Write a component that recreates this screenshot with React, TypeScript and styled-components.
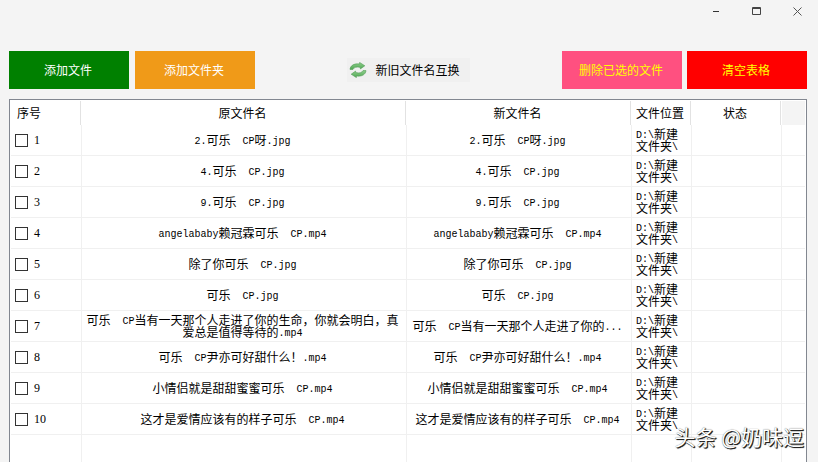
import React, { useState } from "react";
import styled, { createGlobalStyle } from "styled-components";

const GlobalStyle = createGlobalStyle`
  * { box-sizing: border-box; }
  html, body { margin: 0; background: #f4f4f4; }
  body, button, input, table {
    font-family: "Noto Sans CJK SC", sans-serif;
    font-size: 12px;
    line-height: 12px;
    color: #000;
  }
`;

const Window = styled.div`
  display: flex;
  flex-direction: column;
  height: 100vh;
  overflow: hidden;
`;

const TitleBar = styled.header`
  display: flex;
  justify-content: flex-end;
  height: 51px;
  flex: none;
`;

const CaptionButton = styled.button`
  display: flex;
  align-items: center;
  justify-content: center;
  width: 41px;
  height: 23px;
  padding: 0;
  border: 0;
  background: transparent;
`;

const Toolbar = styled.nav`
  display: flex;
  align-items: center;
  justify-content: space-between;
  flex: none;
  padding: 0 11px 0 9px;
`;

const Group = styled.div<{ $gap: number }>`
  display: flex;
  gap: ${(p) => p.$gap}px;
`;

const ActionButton = styled.button<{ $bg: string; $fg: string }>`
  width: 120px;
  height: 38px;
  padding: 0 2px 0 0;
  border: 0;
  background: ${(p) => p.$bg};
  color: ${(p) => p.$fg};
`;

const SwapButton = styled.button`
  display: flex;
  align-items: center;
  gap: 8px;
  height: 24px;
  padding: 0 10px 0 2px;
  border: 0;
  background: #f0f0f0;
`;

const Frame = styled.main`
  display: flex;
  flex: 1;
  margin: 10px 11px 0 9px;
  padding: 1px 1px 0;
  border: 1px solid #828790;
  border-bottom: 0;
  background: #fff;
`;

const Grid = styled.table`
  width: 100%;
  table-layout: fixed;
  border-spacing: 0;
`;

const Column = styled.col<{ $width?: number }>`
  width: ${(p) => (p.$width ? `${p.$width}px` : "auto")};
`;

const HeadCell = styled.th`
  height: 24px;
  padding: 0;
  font-weight: 400;
`;

const HeadLabel = styled.div<{ $start?: boolean }>`
  height: 24px;
  margin-right: 1px;
  padding: ${(p) => (p.$start ? "0 6px" : "0 2px 0 0")};
  border-right: 1px solid #e2e2e2;
  line-height: 24px;
  white-space: nowrap;
  text-align: ${(p) => (p.$start ? "left" : "center")};
`;

const HeadRest = styled.td`
  padding: 0;
  background: #f4f4f4;
`;

const Cell = styled.td<{ $start?: boolean; $last?: boolean }>`
  height: 31px;
  padding: ${(p) => (p.$start ? "0 4px" : "0 6px 0 3px")};
  border-bottom: 1px solid #f0f0f0;
  border-right: ${(p) => (p.$last ? "0" : "1px solid #f0f0f0")};
  text-align: ${(p) => (p.$start ? "left" : "center")};
  vertical-align: middle;
  white-space: pre-wrap;
`;

const EmptyCell = styled.td<{ $last?: boolean }>`
  padding: 0;
  border-right: ${(p) => (p.$last ? "0" : "1px solid #f0f0f0")};
`;

const RowLabel = styled.label`
  display: flex;
  align-items: center;
  gap: 6px;
`;

const Check = styled.input`
  appearance: none;
  width: 13px;
  height: 13px;
  margin: 0;
  border: 1px solid #333;
  background: #fff;
  &:checked { background: #333; box-shadow: inset 0 0 0 2px #fff; }
`;

const RowNumber = styled.span`
  font-family: "Liberation Serif", serif;
  line-height: 14px;
`;

const Latin = styled.span`
  font-family: "Liberation Mono", monospace;
  font-size: 10px;
  line-height: 1px;
  vertical-align: 1px;
`;

const Watermark = styled.div`
  position: absolute;
  right: 14px;
  bottom: 14px;
  font-size: 21px;
  line-height: 24px;
  color: #fff;
  text-shadow: 1px 1px 1px #222, 1px 1px 0 #333, 0 0 1px #666;
  white-space: nowrap;
  pointer-events: none;
`;

/* Half-width characters take exactly half the advance of a full-width one. */
function Mixed({ text }: { text: string }) {
  return (
    <>
      {text.split(/([\x20-\x7e]+)/).map((part, i) =>
        i % 2 ? <Latin key={i}>{part}</Latin> : part
      )}
    </>
  );
}

function SwapIcon() {
  return (
    <svg width="18" height="16" viewBox="0 0 18 16" aria-hidden="true">
      <defs>
        <linearGradient id="leaf" x1="0" y1="0" x2="0" y2="1">
          <stop offset="0" stopColor="#8fd08c" />
          <stop offset="1" stopColor="#4fa653" />
        </linearGradient>
      </defs>
      <g fill="url(#leaf)" stroke="#4f9a54" strokeWidth="0.6" strokeLinejoin="round">
        <path d="M1 7.4C1.4 3.4 5.2 1.3 10.6 2V.4L15.8 3.8 11.4 6.9V5.5C7.6 4.5 5 5.2 4 7.4Z" />
        <path d="M17 8.6C16.6 12.6 12.8 14.7 7.4 14v1.6L2.2 12.2 6.6 9.1v1.4C10.4 11.5 13 10.8 14 8.6Z" />
      </g>
    </svg>
  );
}

const names: [string, string?][] = [
  ["2.可乐  CP呀.jpg"],
  ["4.可乐  CP.jpg"],
  ["9.可乐  CP.jpg"],
  ["angelababy赖冠霖可乐  CP.mp4"],
  ["除了你可乐  CP.jpg"],
  ["可乐  CP.jpg"],
  [
    "可乐  CP当有一天那个人走进了你的生命，你就会明白，真爱总是值得等待的.mp4",
    "可乐  CP当有一天那个人走进了你的...",
  ],
  ["可乐  CP尹亦可好甜什么！.mp4"],
  ["小情侣就是甜甜蜜蜜可乐  CP.mp4"],
  ["这才是爱情应该有的样子可乐  CP.mp4"],
];

export default function App() {
  const [picked, setPicked] = useState<number[]>([]);
  const toggle = (n: number) =>
    setPicked((p) => (p.includes(n) ? p.filter((x) => x !== n) : [...p, n]));

  return (
    <Window>
      <GlobalStyle />
      <TitleBar>
        <CaptionButton aria-label="最小化">
          <svg width="9" height="9" stroke="#333" fill="none"><path d="M2 4.5h6" /></svg>
        </CaptionButton>
        <CaptionButton aria-label="最大化">
          <svg width="9" height="9" stroke="#444" fill="none">
            <path d="M.5 .5h8v7h-8zM0 1.5h9" />
          </svg>
        </CaptionButton>
        <CaptionButton aria-label="关闭">
          <svg width="9" height="9" stroke="#555" fill="none"><path d="M.5 .5l8 8M8.5 .5l-8 8" /></svg>
        </CaptionButton>
      </TitleBar>
      <Toolbar>
        <Group $gap={6}>
          <ActionButton $bg="#008000" $fg="#fff">添加文件</ActionButton>
          <ActionButton $bg="#f09a18" $fg="#fff">添加文件夹</ActionButton>
        </Group>
        <SwapButton>
          <SwapIcon />
          新旧文件名互换
        </SwapButton>
        <Group $gap={5}>
          <ActionButton $bg="#ff5080" $fg="#ff0">删除已选的文件</ActionButton>
          <ActionButton $bg="#ff0000" $fg="#ff0">清空表格</ActionButton>
        </Group>
      </Toolbar>
      <Frame>
        <Grid>
          <colgroup>
            <Column $width={71} />
            <Column />
            <Column $width={225} />
            <Column $width={60} />
            <Column $width={90} />
            <Column $width={23} />
          </colgroup>
          <thead>
            <tr>
              <HeadCell scope="col"><HeadLabel $start>序号</HeadLabel></HeadCell>
              <HeadCell scope="col"><HeadLabel>原文件名</HeadLabel></HeadCell>
              <HeadCell scope="col"><HeadLabel>新文件名</HeadLabel></HeadCell>
              <HeadCell scope="col"><HeadLabel>文件位置</HeadLabel></HeadCell>
              <HeadCell scope="col"><HeadLabel>状态</HeadLabel></HeadCell>
              <HeadRest />
            </tr>
          </thead>
          <tbody>
            {names.map(([before, after], i) => (
              <tr key={i}>
                <Cell $start>
                  <RowLabel>
                    <Check
                      type="checkbox"
                      checked={picked.includes(i)}
                      onChange={() => toggle(i)}
                    />
                    <RowNumber>{i + 1}</RowNumber>
                  </RowLabel>
                </Cell>
                <Cell><Mixed text={before} /></Cell>
                <Cell><Mixed text={after ?? before} /></Cell>
                <Cell $start><Mixed text={"D:\\新建文件夹\\"} /></Cell>
                <Cell />
                <Cell $last />
              </tr>
            ))}
            <tr>
              <EmptyCell />
              <EmptyCell />
              <EmptyCell />
              <EmptyCell />
              <EmptyCell />
              <EmptyCell $last />
            </tr>
          </tbody>
        </Grid>
      </Frame>
      <Watermark>头条 @奶味逗</Watermark>
    </Window>
  );
}
